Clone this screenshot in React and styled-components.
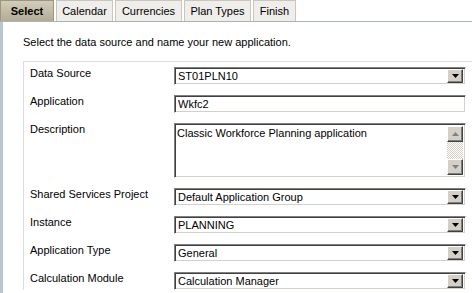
import React from 'react';
import styled, { createGlobalStyle } from 'styled-components';

const GlobalStyle = createGlobalStyle`
  html, body {
    margin: 0;
    padding: 0;
    background: #fff;
  }
  body {
    font-family: "Liberation Sans", Arial, sans-serif;
    font-size: 11px;
    color: #000;
  }
`;

const Page = styled.div`
  width: 472px;
  height: 293px;
  overflow: hidden;
  position: relative;
`;

const TabBar = styled.div`
  display: flex;
  gap: 2px;
  height: 21px;
  border-bottom: 1px solid #a6b4bc;
`;

const Tab = styled.div`
  box-sizing: border-box;
  display: flex;
  align-items: center;
  justify-content: center;
  height: 21px;
  width: ${p => p.$w}px;
  border: 1px solid #c9c6bd;
  border-bottom: none;
  font-size: 11px;
  font-weight: ${p => (p.$active ? 'bold' : 'normal')};
  background: ${p =>
    p.$active
      ? 'linear-gradient(#d2ccba, #b3ab95)'
      : '#efeeea'};
  border-color: ${p => (p.$active ? '#9c957f' : '#c9c6bd')};
`;

const Body = styled.div`
  border-left: 3px solid #b8c6ce;
  height: 272px;
  padding: 14px 0 0 20px;
`;

const Intro = styled.div`
  line-height: 13px;
  margin-bottom: 12px;
`;

const Panel = styled.div`
  border-top: 1px solid #dcdcdc;
  border-left: 1px solid #dcdcdc;
  padding: 5px 0 0 6px;
  display: flex;
  flex-direction: column;
  gap: 10px;
`;

const Row = styled.div`
  display: grid;
  grid-template-columns: 144px 292px;
  align-items: start;
`;

const Label = styled.div`
  line-height: 13px;
  padding-top: 0;
`;

const Field = styled.div`
  box-sizing: border-box;
  position: relative;
  height: ${p => p.$h || 18}px;
  border: 1px solid;
  border-color: #808080 #fff #fff #808080;
  box-shadow: inset 1px 1px 0 #404040, inset -1px -1px 0 #d4d0c8;
  background: #fff;
  display: flex;
  align-items: ${p => (p.$multi ? 'flex-start' : 'center')};
  padding: ${p => (p.$multi ? '3px 0 0 2px' : '0 0 0 3px')};
  line-height: 13px;
  white-space: nowrap;
`;

const Value = styled.span`
  flex: 1;
`;

const DropButton = styled.div`
  box-sizing: border-box;
  width: 16px;
  height: 14px;
  margin-right: 2px;
  background: #d4d0c8;
  border: 1px solid;
  border-color: #fff #404040 #404040 #fff;
  box-shadow: inset -1px -1px 0 #808080;
  display: flex;
  align-items: center;
  justify-content: center;
`;

const Arrow = styled.svg`
  display: block;
`;

const Scrollbar = styled.div`
  width: 16px;
  align-self: stretch;
  margin: -1px 2px 2px 0;
  display: flex;
  flex-direction: column;
  justify-content: space-between;
  background-color: #fff;
  background-image: repeating-conic-gradient(#d4d0c8 0 25%, #fff 0 50%);
  background-size: 2px 2px;
`;

const ScrollButton = styled(DropButton)`
  margin: 0;
  height: 16px;
`;

const Select = ({ value }) => (
  <Field>
    <Value>{value}</Value>
    <DropButton>
      <Arrow width="7" height="4" viewBox="0 0 7 4">
        <path d="M0 0h7L3.5 4z" fill="#000" />
      </Arrow>
    </DropButton>
  </Field>
);

const rows = [
  { label: 'Data Source', kind: 'select', value: 'ST01PLN10' },
  { label: 'Application', kind: 'input', value: 'Wkfc2' },
  { label: 'Description', kind: 'text', value: 'Classic Workforce Planning application' },
  { label: 'Shared Services Project', kind: 'select', value: 'Default Application Group' },
  { label: 'Instance', kind: 'select', value: 'PLANNING' },
  { label: 'Application Type', kind: 'select', value: 'General' },
  { label: 'Calculation Module', kind: 'select', value: 'Calculation Manager' },
];

const tabs = [
  { name: 'Select', w: 54, active: true },
  { name: 'Calendar', w: 57 },
  { name: 'Currencies', w: 67 },
  { name: 'Plan Types', w: 67 },
  { name: 'Finish', w: 43 },
];

export default function App() {
  return (
    <Page>
      <GlobalStyle />
      <TabBar>
        {tabs.map(t => (
          <Tab key={t.name} $w={t.w} $active={t.active}>
            {t.name}
          </Tab>
        ))}
      </TabBar>
      <Body>
        <Intro>Select the data source and name your new application.</Intro>
        <Panel>
          {rows.map(r => (
            <Row key={r.label}>
              <Label>{r.label}</Label>
              {r.kind === 'select' && <Select value={r.value} />}
              {r.kind === 'input' && (
                <Field>
                  <Value>{r.value}</Value>
                </Field>
              )}
              {r.kind === 'text' && (
                <Field $h={55} $multi>
                  <Value>{r.value}</Value>
                  <Scrollbar>
                    <ScrollButton>
                      <Arrow width="7" height="4" viewBox="0 0 7 4">
                        <path d="M0 4h7L3.5 0z" fill="#808080" />
                      </Arrow>
                    </ScrollButton>
                    <ScrollButton>
                      <Arrow width="7" height="4" viewBox="0 0 7 4">
                        <path d="M0 0h7L3.5 4z" fill="#808080" />
                      </Arrow>
                    </ScrollButton>
                  </Scrollbar>
                </Field>
              )}
            </Row>
          ))}
        </Panel>
      </Body>
    </Page>
  );
}
